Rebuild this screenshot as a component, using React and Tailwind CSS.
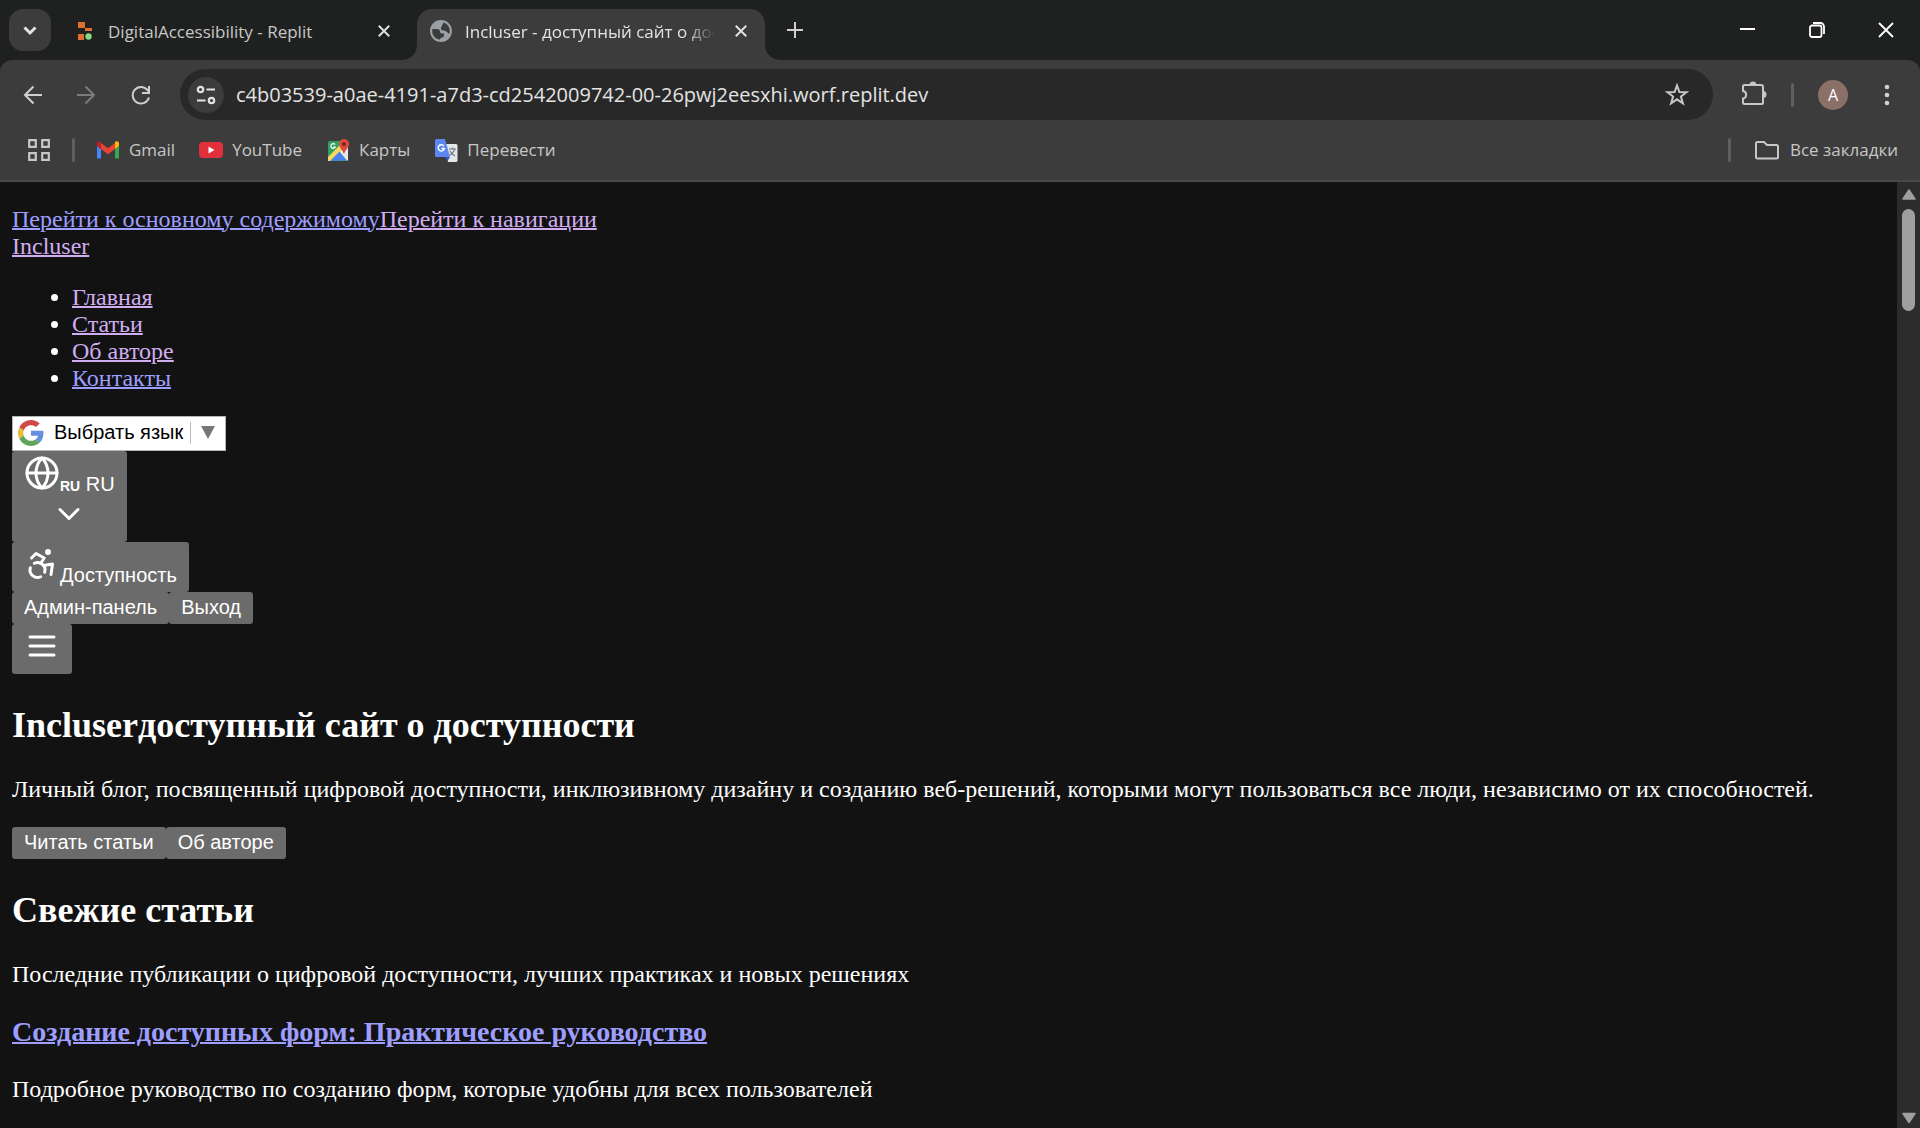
import React from "react";

const chromeFont = "font-['Open_Sans','Noto_Sans',sans-serif]";

function Icon({ size = "size-6", width = 2, className = "", children, box = "0 0 24 24" }) {
  return (
    <svg viewBox={box} className={`${size} ${className}`} fill="none" stroke="currentColor" strokeWidth={width} aria-hidden="true">
      {children}
    </svg>
  );
}

function Chevron() {
  return (
    <Icon size="size-6" width={3}>
      <path d="M6.5 9.5 12 15l5.500-5.500" />
    </Icon>
  );
}

function Cross({ size, width }) {
  return (
    <Icon size={size} width={width} box="0 0 16 16">
      <path d="M1 1 15 15M15 1 1 15" />
    </Icon>
  );
}

function ReplitLogo() {
  return (
    <svg viewBox="0 0 24 24" className="size-6" aria-hidden="true">
      <path d="M4 3h7v6H4zM11 9h7v3h-7zM4 15h6v6H4z" fill="#e0702f" />
      <circle cx="14.500" cy="17.500" r="3.200" fill="#86d886" />
    </svg>
  );
}

function EarthIcon() {
  return (
    <svg viewBox="0 0 24 24" className="size-6" aria-hidden="true">
      <path
        fill="#9aa0a6"
        d="M12 1C5.900 1 1 5.900 1 12s4.900 11 11 11 11-4.900 11-11S18.100 1 12 1zm-1.100 19.700C6.600 20.200 3.200 16.500 3.200 12c0-.7.1-1.300.2-2H8c2 0 3 1 3 2.500s1 2 2.500 2h1.500v2c0 1.500-1.500 2-2.500 2.200-1 .3-1.600 1-1.600 2zM14.500 3.600c3.700 1.100 6.300 4.500 6.300 8.400 0 1.200-.2 2-.5 2.800-1-.3-1.300-1.300-2.300-1.800-1.500-.8-2-1.500-3.500-1.500-1.700 0-2.500-1-2.500-2.300 0-1.400 1-1.700 1-2.700 0-1.200 1.500-1 1.500-2.900z"
      />
    </svg>
  );
}

function GmailIcon() {
  return (
    <svg viewBox="0 0 24 18" className="w-6 h-5" aria-hidden="true">
      <path fill="#4285f4" d="M1 17.500h4V8L1 5z" />
      <path fill="#34a853" d="M19 17.500h4V5l-4 3z" />
      <path fill="#fbbc04" d="M19 2v6l4-3V2.500C23 .5 20.500-.3 19 1z" />
      <path fill="#ea4335" d="M5 8V2l7 5.200L19 2v6l-7 5.200z" />
      <path fill="#c5221f" d="M1 2.500V5l4 3V2L4.500 1.300C3-.3 1 .7 1 2.500z" />
    </svg>
  );
}

function YouTubeIcon() {
  return (
    <svg viewBox="0 0 24 16" className="w-6 h-4" aria-hidden="true">
      <rect width="24" height="16" rx="4" fill="#e1303c" />
      <path d="M9.500 4.500v7L15.500 8z" fill="#fff" />
    </svg>
  );
}

function MapsIcon() {
  return (
    <svg viewBox="0 0 24 24" className="size-6" aria-hidden="true">
      <rect x="2" y="3" width="20" height="20" rx="1.500" fill="#34a060" />
      <path d="M3 23 13 13l8 9.500z" fill="#4a80ec" />
      <path d="M13 13l9-4v13.500h-1z" fill="#e8e8e8" />
      <path d="M2 19 14 7l3 3L4 23H2z" fill="#f7d95a" />
      <path d="M18 17c0-4-5-7-5-11a5 5 0 0 1 10 0c0 4-5 7-5 11z" fill="#dd4b3e" />
      <circle cx="18" cy="6" r="2" fill="#7b231e" />
      <path d="M9 6.500A2.300 2.300 0 1 0 9.300 9H7.200" fill="none" stroke="#fff" strokeWidth="1.200" />
    </svg>
  );
}

function TranslateIcon() {
  return (
    <svg viewBox="0 0 24 24" className="size-6" aria-hidden="true">
      <path d="M11 6h11a1.500 1.500 0 0 1 1.500 1.500v15A1.500 1.500 0 0 1 22 24h-8z" fill="#e4e6e8" />
      <path d="M15 11h7M18.500 9.500V11M20.500 11c-.5 3-2.500 5-5 6.500M16 13c1 2.500 3 4 5 5" stroke="#6b7680" strokeWidth="1.200" fill="none" />
      <path d="M2.500 1H11l5 18H2.500A1.500 1.500 0 0 1 1 17.500v-15A1.500 1.500 0 0 1 2.500 1z" fill="#5b87ee" />
      <path d="M11 19h5l-2.500 4z" fill="#2f56c4" />
      <path d="M9.800 8A3.100 3.100 0 1 0 10.300 10.500H7.500" fill="none" stroke="#fff" strokeWidth="1.500" />
    </svg>
  );
}

function GoogleLogo() {
  return (
    <svg viewBox="0 0 48 48" className="size-[26px]" aria-hidden="true">
      <path fill="#cf4a45" d="M24 9.500c3.540 0 6.710 1.220 9.210 3.600l6.850-6.850C35.900 2.380 30.470 0 24 0 14.620 0 6.510 5.380 2.560 13.220l7.980 6.190C12.430 13.720 17.740 9.500 24 9.500z" />
      <path fill="#6590e0" d="M46.980 24.550c0-1.570-.15-3.090-.38-4.550H24v9.020h12.940c-.58 2.960-2.260 5.480-4.780 7.180l7.730 6c4.510-4.180 7.090-10.360 7.090-17.650z" />
      <path fill="#e6bd3f" d="M10.530 28.590c-.48-1.450-.76-2.990-.76-4.590s.27-3.140.76-4.590l-7.980-6.190C.92 16.460 0 20.120 0 24c0 3.880.92 7.540 2.560 10.780l7.970-6.190z" />
      <path fill="#5fa55a" d="M24 48c6.480 0 11.930-2.130 15.890-5.810l-7.730-6c-2.150 1.450-4.920 2.300-8.160 2.300-6.260 0-11.570-4.220-13.470-9.910l-7.980 6.190C6.510 42.620 14.620 48 24 48z" />
    </svg>
  );
}

function TabStrip() {
  return (
    <header className="flex h-15 shrink-0 items-end bg-[#1f2120]">
      <button aria-label="Поиск вкладок" className="mb-[9px] ml-[9px] flex size-[42px] items-center justify-center rounded-[14px] bg-[#3c3c3c] text-[#e3e3e3]">
        <Chevron />
      </button>
      <div className="flex h-[51px] w-[366px] items-center pb-2 pl-[23px] pr-[27px]">
        <ReplitLogo />
        <span className="ml-[10px] flex-1 pt-[2px] text-[17px] text-[#c7c7c7]">DigitalAccessibility - Replit</span>
        <button aria-label="Закрыть вкладку" className="text-[#e3e3e3]">
          <Cross size="size-3" width={2.500} />
        </button>
      </div>
      <div className="relative flex h-[51px] w-[348px] items-center rounded-t-[15px] bg-[#3c3c3c] pb-2 pl-3 pr-4">
        <svg viewBox="0 0 15 15" className="absolute -left-[15px] bottom-0 size-[15px] text-[#3c3c3c]" aria-hidden="true">
          <path d="M15 0v15H0A15 15 0 0 0 15 0z" fill="currentColor" />
        </svg>
        <svg viewBox="0 0 15 15" className="absolute -right-[15px] bottom-0 size-[15px] text-[#3c3c3c]" aria-hidden="true">
          <path d="M0 0v15h15A15 15 0 0 1 0 0z" fill="currentColor" />
        </svg>
        <EarthIcon />
        <span className="ml-3 w-[250px] overflow-hidden pt-[2px] whitespace-nowrap text-[17px] text-[#e3e3e3] [mask-image:linear-gradient(to_right,#000_88%,transparent)]">
          Incluser - доступный сайт о доступности
        </span>
        <button aria-label="Закрыть вкладку" className="ml-5 text-[#e3e3e3]">
          <Cross size="size-3" width={2.500} />
        </button>
      </div>
      <button aria-label="Новая вкладка" className="mb-[22px] ml-[22px] text-[#d0d0d0]">
        <Icon size="size-4" width={2} box="0 0 16 16">
          <path d="M8 0v16M0 8h16" />
        </Icon>
      </button>
      <div className="ml-auto flex h-full items-center text-white">
        <button aria-label="Свернуть" className="flex w-[69px] justify-center">
          <Icon size="size-4" box="0 0 16 16"><path d="M0 7h15" /></Icon>
        </button>
        <button aria-label="Свернуть в окно" className="flex w-[69px] justify-center">
          <Icon size="size-4" width={1.800} box="0 0 16 16">
            <rect x="1" y="3.500" width="11.500" height="11.500" rx="2" />
            <path d="M4 1h7.500A3.500 3.500 0 0 1 15 4.500V12" />
          </Icon>
        </button>
        <button aria-label="Закрыть" className="flex w-[69px] justify-center">
          <Cross size="size-4" width={1.800} />
        </button>
      </div>
    </header>
  );
}

function AddressBar() {
  return (
    <div className="flex h-[69px] items-center pl-[19px]">
      <button aria-label="Назад" className="p-1 text-[#d0d0d0]">
        <Icon size="size-5" box="0 0 20 20"><path d="M19 10H2M10.500 1.500 2 10l8.500 8.500" /></Icon>
      </button>
      <button aria-label="Вперёд" className="ml-[25px] p-1 text-[#7c7c7c]">
        <Icon size="size-5" box="0 0 20 20"><path d="M1 10h17M9.500 1.500 18 10l-8.500 8.500" /></Icon>
      </button>
      <button aria-label="Обновить" className="ml-[27px] p-1 text-[#d0d0d0]">
        <Icon size="size-5" box="0 0 20 20">
          <path d="M18 12.500A8.300 8.300 0 1 1 16.500 5L18 7M18 1v7h-7" />
        </Icon>
      </button>
      <div className="ml-[25px] flex h-[51px] flex-1 items-center rounded-full bg-[#282828] pl-2 pr-6">
        <button aria-label="Сведения о сайте" className="flex size-9 items-center justify-center rounded-full bg-[#3c3c3c] text-[#e3e3e3]">
          <Icon size="size-5" width={2.200} box="0 0 20 20">
            <circle cx="4.500" cy="4.500" r="2.700" /><path d="M10.500 4.500H19M1 15.500h8.500" /><circle cx="15.500" cy="15.500" r="2.700" />
          </Icon>
        </button>
        <input
          aria-label="Адресная строка"
          className="ml-3 min-w-0 flex-1 bg-transparent text-[20px] text-[#e3e3e3] outline-none"
          defaultValue="c4b03539-a0ae-4191-a7d3-cd2542009742-00-26pwj2eesxhi.worf.replit.dev"
        />
        <button aria-label="Добавить в закладки" className="text-[#c7c7c7]">
          <Icon size="size-6">
            <path d="m12 2.500 2.400 6.500 7 .2-5.500 4.300 2 6.800-5.900-4-5.900 4 2-6.800L2.600 9.200l7-.2z" />
          </Icon>
        </button>
      </div>
      <button aria-label="Расширения" className="mb-1 ml-7 text-[#c7c7c7]">
        <Icon size="w-[26px] h-[26px]" box="0 0 26 26">
          <path d="M4 5h16a2 2 0 0 1 2 2v16a1 1 0 0 1-1 1H3.500A1.500 1.500 0 0 1 2 22.500v-4a3.800 3.800 0 0 0 0-7.500V6.500A1.500 1.500 0 0 1 3.500 5z" />
          <path d="M8.500 5a3.500 3.500 0 0 1 7 0zM22 11a3.500 3.500 0 0 1 0 7z" fill="currentColor" stroke="none" />
        </Icon>
      </button>
      <span className="ml-6 h-6 w-[3px] rounded-full bg-[#5f5f5f]" />
      <button aria-label="Профиль" className="ml-6 flex size-[30px] items-center justify-center rounded-full bg-[#8a7067] text-[16px] text-white">
        A
      </button>
      <button aria-label="Меню браузера" className="ml-6 mr-6 text-[#d0d0d0]">
        <svg viewBox="0 0 24 24" className="size-6" fill="currentColor" aria-hidden="true">
          <circle cx="15" cy="4" r="2.300" /><circle cx="15" cy="12" r="2.300" /><circle cx="15" cy="20" r="2.300" />
        </svg>
      </button>
    </div>
  );
}

function Bookmark({ icon, label }) {
  return (
    <a href="#bookmark" className="flex items-center gap-[9px]">
      {icon}
      {label}
    </a>
  );
}

function BookmarksBar() {
  return (
    <nav aria-label="Закладки" className="flex h-[53px] items-center border-b-2 border-[#484848] pb-[10px] pl-7 pr-[22px] text-[17px] text-[#c7c7c7]">
      <button aria-label="Приложения">
        <Icon size="size-[22px]" width={2.200} box="0 0 22 22">
          <path d="M1.200 1.200h6.600v6.600H1.200zM14.200 1.200h6.600v6.600h-6.600zM1.200 14.200h6.600v6.600H1.200zM14.200 14.200h6.600v6.600h-6.600z" />
        </Icon>
      </button>
      <span className="ml-[22px] h-6 w-[3px] rounded-full bg-[#5f5f5f]" />
      <div className="ml-[21px] flex items-center gap-6">
        <Bookmark icon={<GmailIcon />} label="Gmail" />
        <Bookmark icon={<YouTubeIcon />} label="YouTube" />
        <Bookmark icon={<MapsIcon />} label="Карты" />
        <Bookmark icon={<TranslateIcon />} label="Перевести" />
      </div>
      <span className="ml-auto h-6 w-[3px] rounded-full bg-[#5f5f5f]" />
      <button className="ml-6 flex items-center gap-[11px]">
        <Icon size="w-6 h-5" box="0 0 24 20">
          <path d="M1 17V3.500A1.500 1.500 0 0 1 2.500 2H9l3 3h9.500A1.500 1.500 0 0 1 23 6.500V17a1.500 1.500 0 0 1-1.500 1.500h-19A1.500 1.500 0 0 1 1 17z" />
        </Icon>
        Все закладки
      </button>
    </nav>
  );
}

function PageButton({ label, withIcon, children }) {
  return (
    <button
      aria-label={label}
      className={`rounded-[3px] bg-[#6b6b6b] px-3 text-center whitespace-nowrap text-[20px] leading-6 font-['Liberation_Sans',sans-serif] text-white ${withIcon ? "pt-1 pb-[5px]" : "pt-[3px] pb-[5px]"}`}
    >
      {children}
    </button>
  );
}

function LineIcon({ children }) {
  return (
    <svg viewBox="0 0 24 24" className="inline size-9 align-baseline" fill="none" stroke="currentColor" strokeWidth="2" strokeLinecap="round" strokeLinejoin="round" aria-hidden="true">
      {children}
    </svg>
  );
}

function PageLink({ visited, children }) {
  return (
    <a href="#page" className={`underline decoration-2 ${visited ? "text-[#d0adf0]" : "text-[#9e9eff]"}`}>
      {children}
    </a>
  );
}

const menu = [
  { label: "Главная", visited: true },
  { label: "Статьи", visited: true },
  { label: "Об авторе", visited: true },
  { label: "Контакты", visited: false },
];

function Site() {
  return (
    <div className="min-w-0 flex-1 overflow-hidden px-3 pt-6 text-[24px] leading-[27px] font-['Liberation_Serif',serif] text-white">
      <div>
        <PageLink>Перейти к основному содержимому</PageLink>
        <PageLink visited>Перейти к навигации</PageLink>
      </div>
      <div><PageLink visited>Incluser</PageLink></div>
      <ul className="my-6 list-disc pl-15">
        {menu.map((item) => (
          <li key={item.label}><PageLink visited={item.visited}>{item.label}</PageLink></li>
        ))}
      </ul>
      <div className="flex flex-col items-start">
        <button className="flex h-[35px] items-center border border-[#b5b5b5] bg-white pb-[2px] pl-[5px] text-[20px] font-['Liberation_Sans',sans-serif] text-black">
          <GoogleLogo />
          <span className="ml-[10px]">Выбрать язык</span>
          <span className="ml-[7px] h-[22px] w-px bg-[#bbb]" />
          <svg viewBox="0 0 14 13" className="mx-[10px] h-[13px] w-[14px]" aria-hidden="true">
            <path d="M0 0h14L7 13z" fill="#767676" />
          </svg>
        </button>
        <PageButton withIcon>
          <LineIcon>
            <circle cx="12" cy="12" r="10" />
            <path d="M12 2a14.500 14.500 0 0 0 0 20 14.500 14.500 0 0 0 0-20M2 12h20" />
          </LineIcon>
          <span className="text-[14px] leading-none font-bold">RU</span> RU
          <br />
          <LineIcon><path d="m6 9 6 6 6-6" /></LineIcon>
        </PageButton>
        <PageButton withIcon>
          <LineIcon>
            <circle cx="16" cy="4" r="1" />
            <path d="m18 19 1-7-6 1" />
            <path d="m5 8 3-3 5.500 3-2.360 3.500" />
            <path d="M4.240 14.500a5 5 0 0 0 6.880 6" />
            <path d="M13.760 17.500a5 5 0 0 0-6.880-6" />
          </LineIcon>
          Доступность
        </PageButton>
        <div className="flex">
          <PageButton>Админ-панель</PageButton>
          <PageButton>Выход</PageButton>
        </div>
        <PageButton withIcon label="Открыть меню">
          <LineIcon><path d="M4 6h16M4 12h16M4 18h16" /></LineIcon>
        </PageButton>
      </div>
      <h2 className="my-[30px] text-[36px] leading-[42px] font-bold">Incluserдоступный сайт о доступности</h2>
      <p className="my-6">
        Личный блог, посвященный цифровой доступности, инклюзивному дизайну и созданию веб-решений, которыми могут пользоваться все люди, независимо от их способностей.
      </p>
      <div className="flex">
        <PageButton>Читать статьи</PageButton>
        <PageButton>Об авторе</PageButton>
      </div>
      <h2 className="my-[30px] text-[36px] leading-[42px] font-bold">Свежие статьи</h2>
      <p>Последние публикации о цифровой доступности, лучших практиках и новых решениях</p>
      <h3 className="my-7 text-[28px] leading-8 font-bold">
        <PageLink>Создание доступных форм: Практическое руководство</PageLink>
      </h3>
      <p>Подробное руководство по созданию форм, которые удобны для всех пользователей</p>
    </div>
  );
}

function Scrollbar() {
  return (
    <div className="flex w-[23px] shrink-0 flex-col items-center bg-[#2c2c2c] pt-[6px] pb-1 text-[#9f9f9f]">
      <svg viewBox="0 0 14 12" className="h-3 w-[14px]" aria-hidden="true">
        <path d="M7 2 13 11H1z" fill="currentColor" stroke="currentColor" strokeWidth="1.500" strokeLinejoin="round" />
      </svg>
      <div className="mt-[9px] h-[102px] w-[13px] rounded-full bg-[#9f9f9f]" />
      <svg viewBox="0 0 14 12" className="mt-auto h-3 w-[14px]" aria-hidden="true">
        <path d="M7 10.500 13 1.500H1z" fill="currentColor" stroke="currentColor" strokeWidth="1.500" strokeLinejoin="round" />
      </svg>
    </div>
  );
}

export default function App() {
  return (
    <div className="flex h-screen flex-col overflow-hidden bg-[#121212]">
      <div className={`bg-[#1f2120] ${chromeFont}`}>
        <TabStrip />
        <div className="rounded-t-xl bg-[#3c3c3c]">
          <AddressBar />
          <BookmarksBar />
        </div>
      </div>
      <main className="flex min-h-0 flex-1">
        <Site />
        <Scrollbar />
      </main>
    </div>
  );
}
